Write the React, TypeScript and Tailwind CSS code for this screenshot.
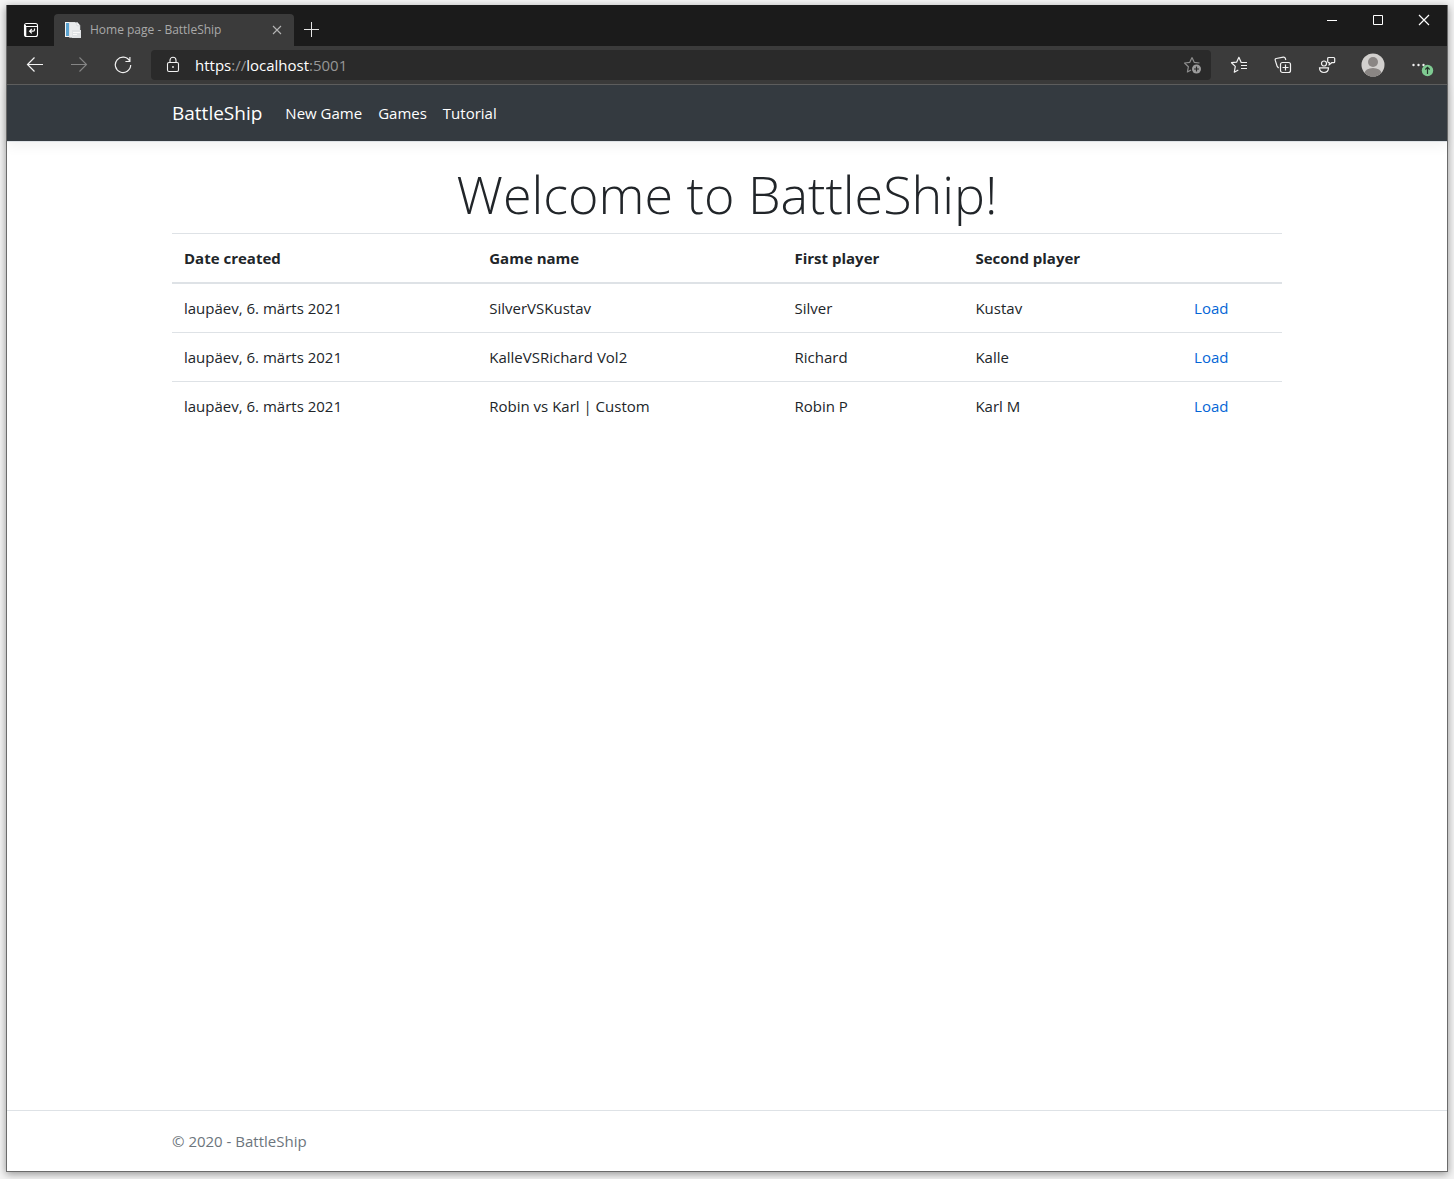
import React from "react";

type Game = { date: string; name: string; first: string; second: string };

const games: Game[] = [
  { date: "laupäev, 6. märts 2021", name: "SilverVSKustav", first: "Silver", second: "Kustav" },
  { date: "laupäev, 6. märts 2021", name: "KalleVSRichard Vol2", first: "Richard", second: "Kalle" },
  { date: "laupäev, 6. märts 2021", name: "Robin vs Karl | Custom", first: "Robin P", second: "Karl M" },
];

function TitleBar() {
  return (
    <div className="flex h-[41px] items-end bg-[#1b1b1b]">
      <button aria-label="Tab actions" className="flex h-8 w-[47px] items-center justify-center">
        <svg width="16" height="16" viewBox="0 0 16 16" fill="none" stroke="#fff" className="ml-px">
          <rect x="1.5" y="1.5" width="13" height="13" rx="2" strokeWidth="1.1" />
          <path d="M2 4.500h12M2.500 3v11" />
          <path d="M2.500 5v9" strokeWidth="1.600" />
          <path d="M11.500 6.500v1.200a1.500 1.500 0 0 1-1.500 1.500H6.800M8.800 7L6.600 9.200l2.200 2.200" strokeWidth="1.200" />
        </svg>
      </button>
      <div className="flex h-8 w-60 items-center rounded-t-[4px] bg-[#3b3b3b] pl-[10px] pr-[10px]">
        <svg width="18" height="18" viewBox="0 0 18 18">
          <path d="M1 1h10v15H1z" fill="#f4f4f4" />
          <path d="M2 2h3v13H2z" fill="#5ba3d0" />
          <path d="M5.500 1.500h8l2.500 3V16.500H5.500z" fill="#e9ebec" stroke="#cfd3d6" strokeWidth=".5" />
          <path d="M13 1.500v3.200h3" fill="#fff" stroke="#c4c8cb" strokeWidth=".6" />
          <path d="M8 9h9v8H8z" fill="#dfe2e4" />
          <path d="M9 11.500h7M9 13.500h4" stroke="#f8f8f8" />
        </svg>
        <span className="ml-2 flex-1 whitespace-nowrap text-[12px] leading-4 text-[#a9a9a9]">Home page - BattleShip</span>
        <button aria-label="Close tab">
          <svg width="14" height="14" viewBox="0 0 14 14" stroke="#b5b5b5" strokeWidth="1.1">
            <path d="M3 3l8 8M11 3l-8 8" />
          </svg>
        </button>
      </div>
      <button aria-label="New tab" className="flex h-8 w-9 items-center justify-center">
        <svg width="16" height="16" viewBox="0 0 16 16" stroke="#e6e6e6" strokeWidth="1">
          <path d="M0 7.500h15M7.500 0v15" />
        </svg>
      </button>
      <div className="ml-auto flex self-start">
        <button aria-label="Minimize" className="flex h-[30px] w-[46px] items-center justify-center">
          <svg width="12" height="12" viewBox="0 0 12 12" stroke="#fff"><path d="M1 6.500h10" /></svg>
        </button>
        <button aria-label="Maximize" className="flex h-[30px] w-[46px] items-center justify-center">
          <svg width="12" height="12" viewBox="0 0 12 12" stroke="#fff" fill="none"><path d="M1.500 1.500h9v9h-9z" /></svg>
        </button>
        <button aria-label="Close" className="flex h-[30px] w-[46px] items-center justify-center">
          <svg width="12" height="12" viewBox="0 0 12 12" stroke="#fff" strokeWidth="1.200"><path d="M1 1l10 10M11 1L1 11" /></svg>
        </button>
      </div>
    </div>
  );
}

function Toolbar() {
  return (
    <div className="flex h-[39px] items-center border-b border-[#5f5f5f] bg-[#3b3b3b]">
      <button aria-label="Back" className="flex w-11 justify-center pl-3">
        <svg width="18" height="18" viewBox="0 0 18 18" fill="none" stroke="#f2f2f2" strokeWidth="1.200">
          <path d="M17 8.500H1.500M8.500 1.500L1.500 8.500l7 7" />
        </svg>
      </button>
      <button aria-label="Forward" className="flex w-11 justify-center pl-3">
        <svg width="18" height="18" viewBox="0 0 18 18" fill="none" stroke="#858585" strokeWidth="1.100">
          <path d="M1 8.500h15.500M9.500 1.500l7 7-7 7" />
        </svg>
      </button>
      <button aria-label="Refresh" className="flex w-11 justify-center pl-3">
        <svg width="18" height="18" viewBox="0 0 18 18" fill="none" stroke="#f2f2f2" strokeWidth="1.200">
          <path d="M15.700 5A7.700 7.700 0 1 0 16.700 9M15.900 1v4.500h-4.500" />
        </svg>
      </button>
      <div className="ml-3 flex h-[30px] flex-1 items-center rounded-[4px] bg-[#2a2a2a] pl-[14px] pr-2">
        <svg width="16" height="18" viewBox="0 0 16 18" fill="none" stroke="#f2f2f2" strokeWidth="1.100">
          <rect x="2.500" y="6.500" width="11" height="9" rx="1.500" />
          <path d="M5 6.500V4.200a3 3 0 0 1 6 0v2.300" />
          <circle cx="8" cy="11" r=".9" fill="#f2f2f2" stroke="none" />
        </svg>
        <div
          role="textbox"
          aria-label="Address"
          contentEditable
          suppressContentEditableWarning
          className="ml-[14px] flex-1 text-[15px] leading-5 text-[#969696] outline-none"
        >
          <span className="text-white">https</span>://<span className="text-white">localhost</span>:5001
        </div>
        <button aria-label="Add to favorites">
          <svg width="20" height="20" viewBox="0 0 20 20" fill="none" stroke="#8d8d8d" strokeWidth="1.200" strokeLinejoin="round">
            <path d="M9 2.500L11.200 7.300 16.500 8M9 2.500L6.800 7.300 1.500 8l3.900 3.700-1 5.300L8 15" />
            <circle cx="13.500" cy="14" r="4.500" fill="#9c9c9c" stroke="none" />
            <path d="M11 14h5M13.500 11.500v5" stroke="#2a2a2a" />
          </svg>
        </button>
      </div>
      <div className="ml-[6px] flex items-center">
        <button aria-label="Favorites" className="flex w-11 justify-center">
          <svg width="18" height="18" viewBox="0 0 18 18" fill="none" stroke="#f2f2f2" strokeWidth="1.200" strokeLinejoin="round">
            <path d="M17 6.500h-5.800L8.900 1.300 6.600 6.200 1.500 6.700l3.800 3.700-1 5.800 4-2.200M11 9.500h6M11 12.500h6" />
          </svg>
        </button>
        <button aria-label="Collections" className="flex w-11 justify-center">
          <svg width="18" height="18" viewBox="0 0 18 18" fill="none" stroke="#f2f2f2" strokeWidth="1.200">
            <rect x="6.500" y="6.500" width="10" height="10" rx="2" />
            <path d="M11.500 8.500v6M8.500 11.500h6M4.600 12.200L3.100 10.200 1.200 4.200Q.8 2.800 2.200 2.500L9.300 1.100Q10.800.9 11.300 2.300L11.800 4" />
          </svg>
        </button>
        <button aria-label="Feedback" className="flex w-11 justify-center">
          <svg width="18" height="18" viewBox="0 0 18 18" fill="none" stroke="#f2f2f2" strokeWidth="1.200">
            <circle cx="6" cy="7.500" r="2.500" />
            <path d="M1.500 11.800h9c0 3-1.700 4.700-4.500 4.700s-4.500-1.700-4.500-4.700zM9.700 2.500q0-1 1-1h5q1 0 1 1v3.200q0 1-1 1h-2l-2.500 2V6.700q-1.500 0-1.500-1.200z" />
          </svg>
        </button>
        <button aria-label="Profile" className="flex w-12 justify-center">
          <svg width="24" height="24" viewBox="0 0 24 24">
            <clipPath id="avatar"><circle cx="12" cy="12" r="11.500" /></clipPath>
            <g clipPath="url(#avatar)">
              <path d="M0 0h24v24H0z" fill="#d2d0ce" />
              <circle cx="12" cy="9" r="5" fill="#8a8684" />
              <ellipse cx="12" cy="20.500" rx="8.500" ry="5.500" fill="#8a8684" />
            </g>
          </svg>
        </button>
        <button aria-label="Settings, update available" className="mr-3 flex w-[38px] justify-end">
          <svg width="26" height="24" viewBox="0 0 26 24" fill="#f2f2f2">
            <circle cx="4.500" cy="12" r="1.200" /><circle cx="9.500" cy="12" r="1.200" /><circle cx="14.500" cy="12" r="1.200" />
            <circle cx="18.500" cy="17.500" r="5.700" fill="#7fcb92" />
            <path d="M18.500 21v-6.500M16.300 16.500L18.500 14.300l2.200 2.200" fill="none" stroke="#26352a" strokeWidth="1.200" />
          </svg>
        </button>
      </div>
    </div>
  );
}

export default function App() {
  return (
    <div className="flex min-h-screen flex-col bg-[#f4f4f4] px-[6px] pb-[7px] pt-[5px] font-['Open_Sans','Noto_Sans',sans-serif] text-[#212529]">
      <div className="flex flex-1 flex-col border-x border-b border-[#6b6b6b] bg-white shadow-[0_2px_8px_rgba(0,0,0,0.4)]">
        <TitleBar />
        <Toolbar />
        <header className="border-b border-[#dee2e6] bg-[#343a40] shadow-[0_4px_12px_rgba(0,0,0,0.06)]">
          <nav className="mx-auto flex h-14 max-w-[1140px] items-center px-[15px] text-[15px] text-white">
            <a href="#home" className="mr-[23px] text-[19px] leading-[30px]">BattleShip</a>
            <a href="#new" className="mr-4">New Game</a>
            <a href="#games" className="mr-4">Games</a>
            <a href="#tutorial">Tutorial</a>
          </nav>
        </header>
        <main className="mx-auto w-full max-w-[1140px] flex-1 px-[15px] pt-5 text-[15px] leading-6">
          <h1 className="mb-2 text-center text-[52px] font-light leading-[63px]">Welcome to BattleShip!</h1>
          <table className="w-full table-fixed border-collapse text-left">
            <colgroup>
              <col className="w-[27.5%]" />
              <col className="w-[27.5%]" />
              <col className="w-[16.3%]" />
              <col className="w-[19.7%]" />
              <col />
            </colgroup>
            <thead>
              <tr className="border-b-2 border-t border-[#dee2e6]">
                <th className="p-3 font-bold">Date created</th>
                <th className="p-3 font-bold">Game name</th>
                <th className="p-3 font-bold">First player</th>
                <th className="p-3 font-bold">Second player</th>
                <th className="p-3"></th>
              </tr>
            </thead>
            <tbody>
              {games.map((g) => (
                <tr key={g.name} className="border-t border-[#dee2e6]">
                  <td className="p-3">{g.date}</td>
                  <td className="p-3">{g.name}</td>
                  <td className="p-3">{g.first}</td>
                  <td className="p-3">{g.second}</td>
                  <td className="p-3"><a href="#load" className="text-[#0366d6]">Load</a></td>
                </tr>
              ))}
            </tbody>
          </table>
        </main>
        <footer className="border-t border-[#dee2e6] text-[15px] leading-[60px] text-[#6c757d]">
          <div className="mx-auto max-w-[1140px] px-[15px]">© 2020 - BattleShip</div>
        </footer>
      </div>
    </div>
  );
}
